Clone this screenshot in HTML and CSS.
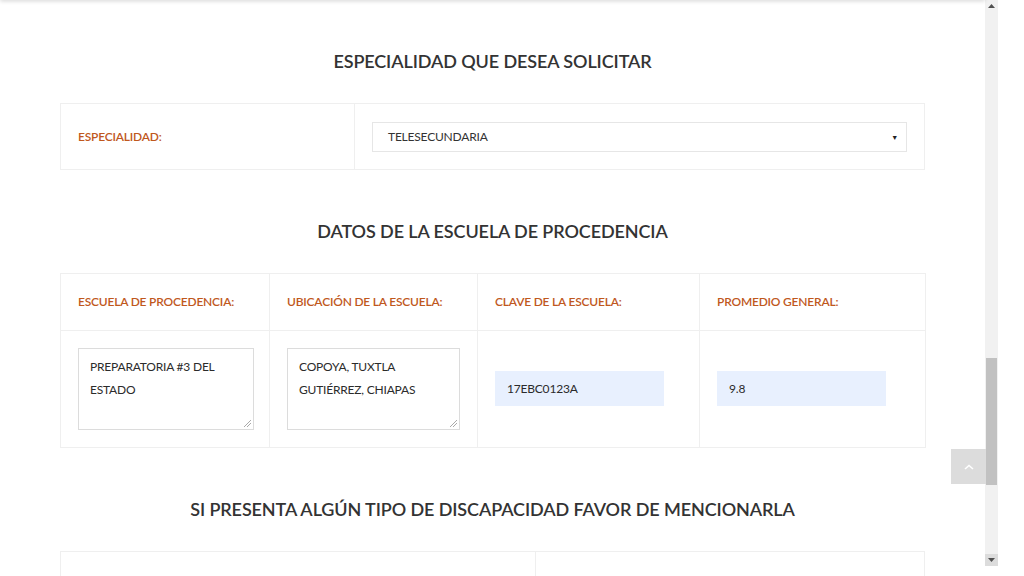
FILE: index.html
```html
<!DOCTYPE html>
<html lang="es">
<head>
<meta charset="utf-8">
<title>Solicitud</title>
<link rel="stylesheet" href="styles.css">
</head>
<body>
<div class="screen">
  <main class="page">
    <div class="topshadow"></div>
    <section class="section">
      <h2 class="section-title">ESPECIALIDAD QUE DESEA SOLICITAR</h2>
      <table class="form-table">
        <colgroup><col class="col-spec-label"><col></colgroup>
        <tr class="spec-row">
          <td class="cell label">ESPECIALIDAD:</td>
          <td class="cell"><div class="select"><span>TELESECUNDARIA</span><span class="caret">▼</span></div></td>
        </tr>
      </table>
    </section>

    <section class="section">
      <h2 class="section-title">DATOS DE LA ESCUELA DE PROCEDENCIA</h2>
      <table class="form-table">
        <colgroup><col class="c1"><col class="c2"><col class="c3"><col class="c4"></colgroup>
        <tr class="head-row">
          <td class="cell label">ESCUELA DE PROCEDENCIA:</td>
          <td class="cell label">UBICACIÓN DE LA ESCUELA:</td>
          <td class="cell label">CLAVE DE LA ESCUELA:</td>
          <td class="cell label">PROMEDIO GENERAL:</td>
        </tr>
        <tr class="body-row">
          <td class="cell first"><div class="textarea">PREPARATORIA #3 DEL ESTADO<span class="grip"></span></div></td>
          <td class="cell"><div class="textarea">COPOYA, TUXTLA GUTIÉRREZ, CHIAPAS<span class="grip"></span></div></td>
          <td class="cell"><div class="input">17EBC0123A</div></td>
          <td class="cell"><div class="input">9.8</div></td>
        </tr>
      </table>
    </section>

    <section class="section">
      <h2 class="section-title">SI PRESENTA ALGÚN TIPO DE DISCAPACIDAD FAVOR DE MENCIONARLA</h2>
      <table class="form-table">
        <colgroup><col class="col-half"><col></colgroup>
        <tr><td class="cell tall"></td><td class="cell tall"></td></tr>
      </table>
    </section>

    <a class="to-top" href="#">
      <svg width="10" height="6" viewBox="0 0 10 6"><path d="M1 5 L5 1.5 L9 5" fill="none" stroke="#fff" stroke-width="1.6"/></svg>
    </a>
  </main>
  <div class="scrollbar">
    <div class="sb-btn"><svg width="7" height="4" viewBox="0 0 7 4"><path d="M0 4 L3.5 0 L7 4Z" fill="#505050"/></svg></div>
    <div class="sb-track"><div class="sb-thumb"></div></div>
    <div class="sb-btn down"><svg width="7" height="4" viewBox="0 0 7 4"><path d="M0 0 L3.5 4 L7 0Z" fill="#505050"/></svg></div>
  </div>
  <div class="gutter"></div>
</div>
</body>
</html>
```

FILE: styles.css
```css
* { box-sizing: border-box; }
html, body { margin: 0; padding: 0; background: #fff; }
body {
  font-family: "Lato", "Open Sans", "Liberation Sans", sans-serif;
  color: #333;
  overflow: hidden;
}
.screen {
  display: flex;
  width: 1024px;
  height: 576px;
  overflow: hidden;
}
.page {
  position: relative;
  width: 985px;
  flex: none;
  padding-top: 49px;
}
.topshadow {
  position: absolute;
  left: 0; right: 0; top: -4px;
  height: 4px;
  box-shadow: 0 1px 4px rgba(0,0,0,0.18);
}
.section {
  width: 865px;
  margin: 0 auto 49px;
}
.section-title {
  margin: 0 0 30px;
  text-align: center;
  font-size: 18px;
  line-height: 24px;
  font-weight: 600;
  letter-spacing: -0.1px;
  color: #333;
}
.form-table {
  width: 865px;
  border-collapse: collapse;
  table-layout: fixed;
  border: 1px solid #efefef;
}
.col-spec-label { width: 294px; }
.c1 { width: 209px; }
.c2 { width: 208px; }
.c3 { width: 222px; }
.c4 { width: 226px; }
.col-half { width: 475px; }
.cell {
  border: 1px solid #efefef;
  padding: 17px 17px;
  vertical-align: middle;
  font-size: 12px;
}
.spec-row .cell { height: 66px; }
.label {
  color: #c0581d;
  font-weight: 600;
  font-size: 12px;
  letter-spacing: -0.2px;
  line-height: 20px;
  white-space: nowrap;
}
.head-row .cell { height: 57px; }
.body-row .cell { height: 117px; padding-top: 16px; padding-bottom: 17px; }
.body-row .first { padding-right: 15px; }
.select {
  display: flex;
  justify-content: space-between;
  align-items: center;
  height: 30px;
  border: 1px solid #e6e6e6;
  padding: 0 8px 0 15px;
  font-size: 12px;
  letter-spacing: -0.2px;
  color: #333;
}
.caret { font-size: 7px; color: #222; }
.textarea {
  position: relative;
  height: 82px;
  border: 1px solid #dcdcdc;
  padding: 6px 11px;
  font-size: 12px;
  letter-spacing: -0.2px;
  line-height: 23px;
  color: #2b2b2b;
}
.grip {
  position: absolute;
  right: 2px; bottom: 2px;
  width: 7px; height: 7px;
  background: linear-gradient(135deg, transparent 45%, #aaa 45%, #aaa 52%, transparent 52%, transparent 70%, #aaa 70%, #aaa 77%, transparent 77%);
}
.input {
  width: 169px;
  height: 35px;
  background: #e8f0fe;
  padding: 0 12px;
  display: flex;
  align-items: center;
  font-size: 12px;
  letter-spacing: -0.2px;
  color: #2b2b2b;
}
.tall { height: 60px; }
.to-top {
  position: absolute;
  left: 951px;
  top: 449px;
  width: 35px;
  height: 35px;
  background: #dcdcdc;
  display: flex;
  align-items: center;
  justify-content: center;
}
.scrollbar {
  width: 13px;
  flex: none;
  height: 566px;
  background: #f1f1f1;
  display: flex;
  flex-direction: column;
}
.sb-btn {
  height: 12px;
  display: flex;
  align-items: center;
  justify-content: center;
}
.sb-btn.down { background: #dcdcdc; }
.sb-track {
  flex: 1;
  padding-top: 346px;
}
.sb-thumb {
  height: 127px;
  background: #c1c1c1;
  margin: 0 1px;
}
.gutter { flex: 1; }
```
